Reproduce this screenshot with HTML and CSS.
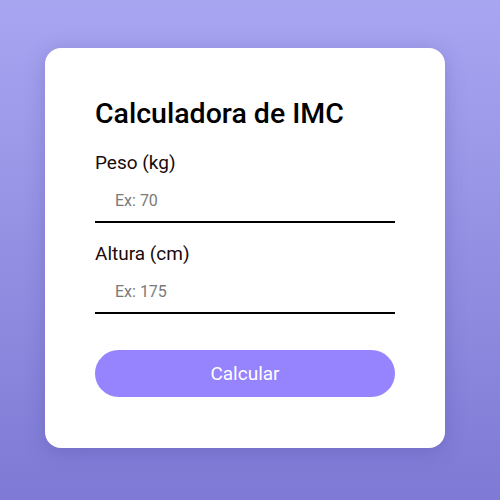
FILE: index.html
```html
<!DOCTYPE html>
<html lang="pt">
<head>
<meta charset="utf-8">
<title>Calculadora de IMC</title>
<link rel="stylesheet" href="styles.css">
</head>
<body>
<main class="card">
  <h1 class="title">Calculadora de IMC</h1>
  <div class="field">
    <label class="label" for="peso">Peso (kg)</label>
    <input class="input" id="peso" type="number" placeholder="Ex: 70">
  </div>
  <div class="field">
    <label class="label" for="altura">Altura (cm)</label>
    <input class="input" id="altura" type="number" placeholder="Ex: 175">
  </div>
  <button class="button" type="button">Calcular</button>
</main>
</body>
</html>
```
FILE: styles.css
```css
* { box-sizing: border-box; }
html, body { height: 100%; }
body {
  margin: 0;
  font-family: Roboto, "Liberation Sans", sans-serif;
  background: linear-gradient(180deg, #a8a6f1 0%, #7e7ad5 100%);
  display: flex;
  justify-content: center;
  align-items: flex-start;
  padding: 48px 10px 0 0;
}
.card {
  width: 400px;
  height: 400px;
  background: #fff;
  border-radius: 16px;
  padding: 50px;
  box-shadow: 0 4px 20px rgba(60, 50, 140, 0.25);
  display: flex;
  flex-direction: column;
}
.title {
  margin: 0 0 22px;
  font-size: 28.5px;
  font-weight: 500;
  color: #000;
  line-height: 32px;
}
.field {
  display: flex;
  flex-direction: column;
  margin-bottom: 20px;
}
.label {
  font-size: 19px;
  line-height: 22px;
  color: #1a0a0a;
  margin-bottom: 6px;
}
.input {
  font-family: Roboto, "Liberation Sans", sans-serif;
  font-size: 16px;
  line-height: 19px;
  padding: 11px 20px;
  border: none;
  border-bottom: 2px solid #000;
  outline: none;
  width: 100%;
  background: transparent;
}
.input::placeholder { color: #7a7a7a; }
.button {
  margin-top: 16px;
  height: 47px;
  border: none;
  border-radius: 24px;
  background: #9683fe;
  color: #fff;
  font-family: Roboto, "Liberation Sans", sans-serif;
  font-size: 19px;
}
```
